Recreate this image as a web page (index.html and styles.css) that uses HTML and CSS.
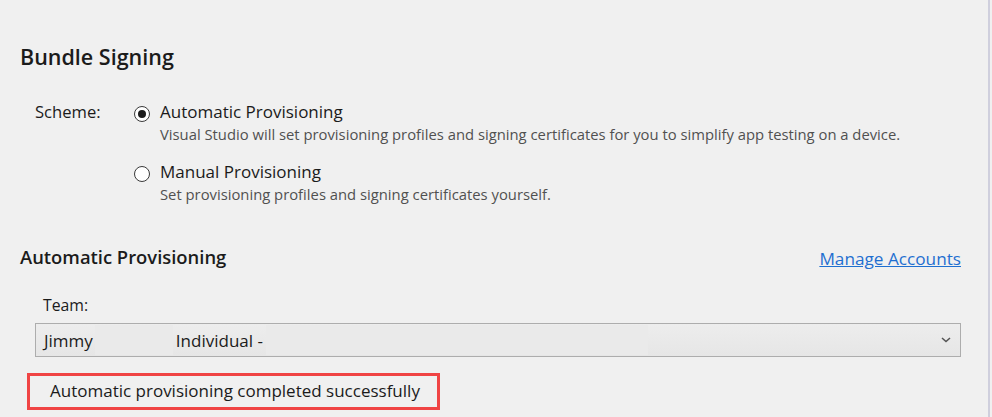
FILE: index.html
```html
<!DOCTYPE html>
<html lang="en">
<head>
    <meta charset="UTF-8">
    <meta name="viewport" content="width=device-width, initial-scale=1.0">
    <link rel="stylesheet" href="styles.css">
</head>
<body>

<div class="panel">

    <h2 class="section-title">Bundle Signing</h2>

    <div class="scheme">
        <span class="field-label">Scheme:</span>
        <div class="options">
            <div class="option">
                <span class="radio checked"></span>
                <div>
                    <div class="option-title">Automatic Provisioning</div>
                    <div class="option-desc">Visual Studio will set provisioning profiles and signing certificates for you to simplify app testing on a device.</div>
                </div>
            </div>
            <div class="option">
                <span class="radio"></span>
                <div>
                    <div class="option-title">Manual Provisioning</div>
                    <div class="option-desc">Set provisioning profiles and signing certificates yourself.</div>
                </div>
            </div>
        </div>
    </div>

    <div class="section-head">
        <h2 class="sub-title">Automatic Provisioning</h2>
        <a href="#" class="link">Manage Accounts</a>
    </div>

    <div class="team-label">Team:</div>

    <div class="select">
        <span class="team-name">Jimmy</span>
        <span class="blank short"></span>
        <span class="team-kind">Individual -</span>
        <span class="blank long"></span>
        <svg class="chevron" width="10" height="6" viewBox="0 0 10 6">
            <path d="M1 1 L5 4.5 L9 1" fill="none" stroke="#555" stroke-width="1.6"/>
        </svg>
    </div>

    <div class="status">Automatic provisioning completed successfully</div>

</div>

</body>
</html>
```

FILE: styles.css
```css
body {
    margin: 0;
    background: #f0f0f0;
    font-family: "Open Sans", "Noto Sans", sans-serif;
    color: #1b1b1b;
}

.panel {
    width: 990px;
    height: 417px;
    border-right: 2px solid #cfcfdd;
    padding: 43px 0 0 20px;
    box-sizing: border-box;
}

.section-title {
    margin: 0;
    font-size: 21.5px;
    line-height: 28px;
    font-weight: 600;
}

.scheme {
    display: flex;
    margin-top: 30px;
    padding-left: 15px;
}

.field-label {
    width: 99px;
    font-size: 16.6px;
    line-height: 22px;
}

.options {
    display: flex;
    flex-direction: column;
    gap: 16px;
}

.option {
    display: flex;
    gap: 10px;
}

/* round radio mark, filled dot when selected */
.radio {
    width: 14px;
    height: 14px;
    margin-top: 5px;
    border: 1px solid #3a3a3a;
    border-radius: 50%;
    background: #fff;
    display: flex;
    align-items: center;
    justify-content: center;
    flex-shrink: 0;
}

.radio.checked::after {
    content: "";
    width: 8px;
    height: 8px;
    border-radius: 50%;
    background: #1b1b1b;
}

.option-title {
    font-size: 17px;
    line-height: 22px;
}

.option-desc {
    font-size: 14.8px;
    line-height: 22px;
    color: #505050;
}

.section-head {
    display: flex;
    justify-content: space-between;
    align-items: flex-start;
    height: 26px;
    margin-top: 39px;
    width: 941px;
}

.sub-title {
    margin: 0;
    font-size: 18.4px;
    line-height: 26px;
    font-weight: 600;
}

.link {
    padding-top: 3px;
    color: #1f6fd0;
    font-size: 17.2px;
    line-height: 23px;
    text-decoration: underline;
}

.team-label {
    margin: 25px 0 0 23px;
    font-size: 15.8px;
    line-height: 20px;
}

.select {
    display: flex;
    align-items: center;
    width: 926px;
    height: 34px;
    margin: 8px 0 0 15px;
    padding: 0 0 0 8px;
    box-sizing: border-box;
    border: 1px solid #adadad;
    background: linear-gradient(#ededed, #e6e6e6);
    font-size: 17px;
}

.blank {
    align-self: stretch;
    margin: 1px 0;
    background: #eaeaea;
}

.blank.short {
    width: 78px;
    margin-left: 2px;
    margin-right: 3px;
}

.blank.long {
    width: 382px;
    margin-left: 3px;
}

.chevron {
    margin-left: auto;
    margin-right: 9px;
}

.status {
    width: fit-content;
    margin: 16px 0 0 7px;
    padding: 5px 17px 6px 20px;
    border: 3px solid #f04444;
    font-size: 17px;
    line-height: 20px;
}
```
